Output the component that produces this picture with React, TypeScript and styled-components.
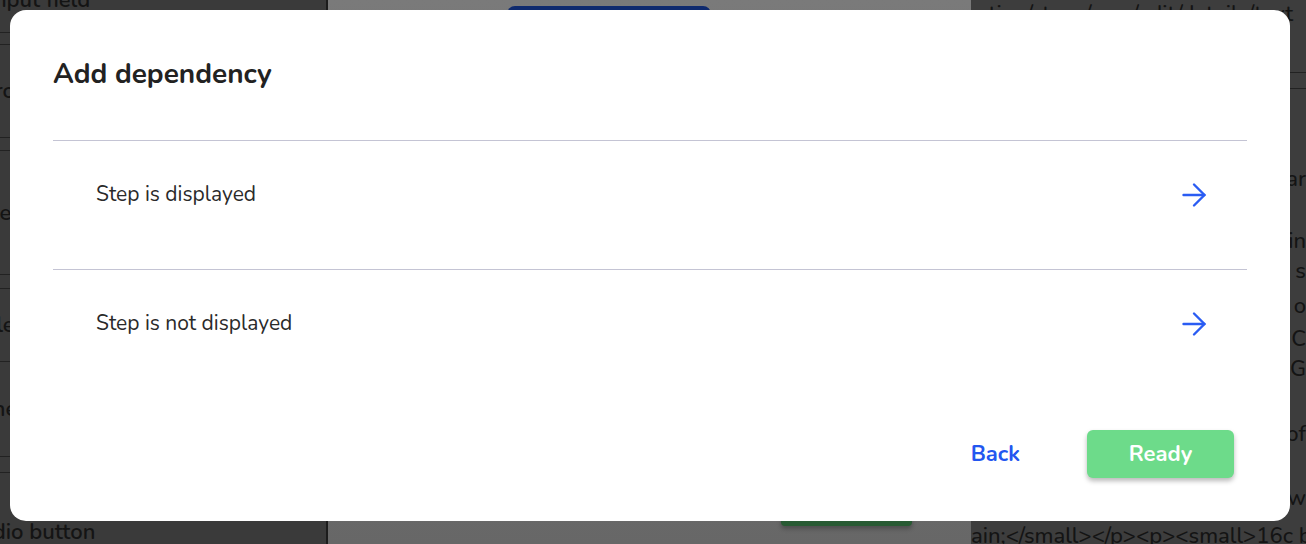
import React from "react";
import styled, { createGlobalStyle } from "styled-components";
import { ArrowRight } from "lucide-react";

const GlobalStyle = createGlobalStyle`
  html, body {
    margin: 0;
    padding: 0;
    height: 100%;
    overflow: hidden;
    font-family: "Nunito", "Lato", "Open Sans", sans-serif;
  }
  #root {
    height: 100%;
  }
`;

const Page = styled.div`
  display: grid;
  grid-template-columns: 328px 643px 1fr;
  height: 544px;
  width: 1306px;
  overflow: hidden;
`;

const SidePanel = styled.div<{ $right?: boolean }>`
  background: ${(p) => (p.$right ? "#3d3d3d" : "#3a3a3a")};
  border-right: ${(p) => (p.$right ? "none" : "2px solid #1c1c1c")};
  display: flex;
  flex-direction: column;
  color: #141414;
  font-size: 22px;
  font-weight: 600;
  overflow: hidden;
  white-space: nowrap;
`;

const PanelRow = styled.div<{ $h: number; $line?: boolean; $shift?: number }>`
  height: ${(p) => p.$h}px;
  display: flex;
  align-items: center;
  border-bottom: ${(p) => (p.$line ? "1px solid #222" : "none")};
  flex-shrink: 0;
  span {
    margin-left: ${(p) => -(p.$shift ?? 22)}px;
  }
`;

const CodeRow = styled.div<{ $gap?: number; $start?: boolean; $line?: boolean; $h?: number }>`
  height: ${(p) => p.$h ?? 30}px;
  margin-top: ${(p) => p.$gap ?? 0}px;
  flex-shrink: 0;
  display: flex;
  align-items: center;
  font-size: 22px;
  font-weight: 500;
  justify-content: ${(p) => (p.$start ? "flex-start" : "flex-end")};
  border-bottom: ${(p) => (p.$line ? "1px solid #222" : "none")};
`;

const Middle = styled.div`
  background: linear-gradient(#7a7a7a, #676767);
  display: flex;
  flex-direction: column;
  justify-content: space-between;
  align-items: center;
`;

const NavyButton = styled.div`
  width: 204px;
  height: 20px;
  margin-top: 6px;
  margin-right: 82px;
  border-radius: 8px;
  background: #0f2a6e;
`;

const DarkGreenButton = styled.div`
  width: 131px;
  height: 10px;
  margin-left: 394px;
  background: #285a33;
  border-radius: 0 0 4px 4px;
  margin-bottom: 18px;
  box-shadow: 0 3px 4px rgba(0, 0, 0, 0.25);
`;

const Modal = styled.div`
  position: fixed;
  left: 10px;
  top: 10px;
  width: 1280px;
  height: 511px;
  box-sizing: border-box;
  background: #fff;
  border-radius: 16px;
  padding: 0 43px;
  display: flex;
  flex-direction: column;
`;

const Title = styled.h2`
  margin: 46px 0 48px;
  font-size: 28px;
  line-height: 36px;
  font-weight: 700;
  color: #222;
`;

const OptionRow = styled.div`
  height: 129px;
  box-sizing: border-box;
  border-top: 1px solid #c4c4d4;
  padding: 39px 35px 0 43px;
  display: flex;
  justify-content: space-between;
  align-items: flex-start;
  cursor: pointer;
`;

const OptionLabel = styled.span`
  font-size: 21px;
  line-height: 28px;
  color: #2a2a2a;
`;

const ArrowIcon = styled(ArrowRight)`
  color: #2a5cf3;
  margin-top: -3px;
`;

const Footer = styled.div`
  display: flex;
  justify-content: flex-end;
  align-items: center;
  gap: 53px;
  margin-top: 32px;
  padding-right: 13px;
`;

const TextButton = styled.button`
  background: none;
  border: none;
  padding: 0 14px;
  font-family: inherit;
  font-size: 22px;
  font-weight: 700;
  color: #2356f0;
  cursor: pointer;
`;

const PrimaryButton = styled.button`
  width: 147px;
  height: 48px;
  border: none;
  border-radius: 6px;
  background: #6ddb8a;
  color: #fff;
  font-family: inherit;
  font-size: 22px;
  font-weight: 700;
  box-shadow: 0 3px 5px rgba(0, 0, 0, 0.28);
  cursor: pointer;
`;

const options = ["Step is displayed", "Step is not displayed"];

const codeLines: { text: string; gap: number }[] = [
  { text: "ar", gap: 75 },
  { text: "ain", gap: 32 },
  { text: "s", gap: 0 },
  { text: "o", gap: 5 },
  { text: "'C", gap: 3 },
  { text: "G", gap: 0 },
  { text: "of", gap: 35 },
  { text: "w", gap: 34 },
];

export default function App() {
  return (
    <>
      <GlobalStyle />
      <Page>
        <SidePanel>
          <PanelRow $h={20} $shift={12} style={{ marginTop: -10 }}>
            <span>Input field</span>
          </PanelRow>
          <PanelRow $h={22} $line />
          <PanelRow $h={11} $line />
          <PanelRow $h={92} $line>
            <span>Dropdown</span>
          </PanelRow>
          <PanelRow $h={12} $line />
          <PanelRow $h={123} $line>
            <span>Step</span>
          </PanelRow>
          <PanelRow $h={13} $line />
          <PanelRow $h={72} $line>
            <span>File upload</span>
          </PanelRow>
          <PanelRow $h={94} $line>
            <span>Checkbox</span>
          </PanelRow>
          <PanelRow $h={15} $line />
          <PanelRow $h={118} $shift={34}>
            <span>Radio button</span>
          </PanelRow>
        </SidePanel>
        <Middle>
          <NavyButton />
          <DarkGreenButton />
        </Middle>
        <SidePanel $right>
          <CodeRow $h={28} $start>
            &nbsp;ation/steps/new/edit/details/text
          </CodeRow>
          <CodeRow $h={44} $line />
          <CodeRow $h={15} $line />
          {codeLines.map((line, i) => (
            <CodeRow key={i} $gap={line.gap}>
              {line.text}
            </CodeRow>
          ))}
          <CodeRow $gap={8} $start>
            ain;&lt;/small&gt;&lt;/p&gt;&lt;p&gt;&lt;small&gt;16c b
          </CodeRow>
        </SidePanel>
      </Page>
      <Modal>
        <Title>Add dependency</Title>
        {options.map((label) => (
          <OptionRow key={label}>
            <OptionLabel>{label}</OptionLabel>
            <ArrowIcon size={36} strokeWidth={1.6} />
          </OptionRow>
        ))}
        <Footer>
          <TextButton>Back</TextButton>
          <PrimaryButton>Ready</PrimaryButton>
        </Footer>
      </Modal>
    </>
  );
}
